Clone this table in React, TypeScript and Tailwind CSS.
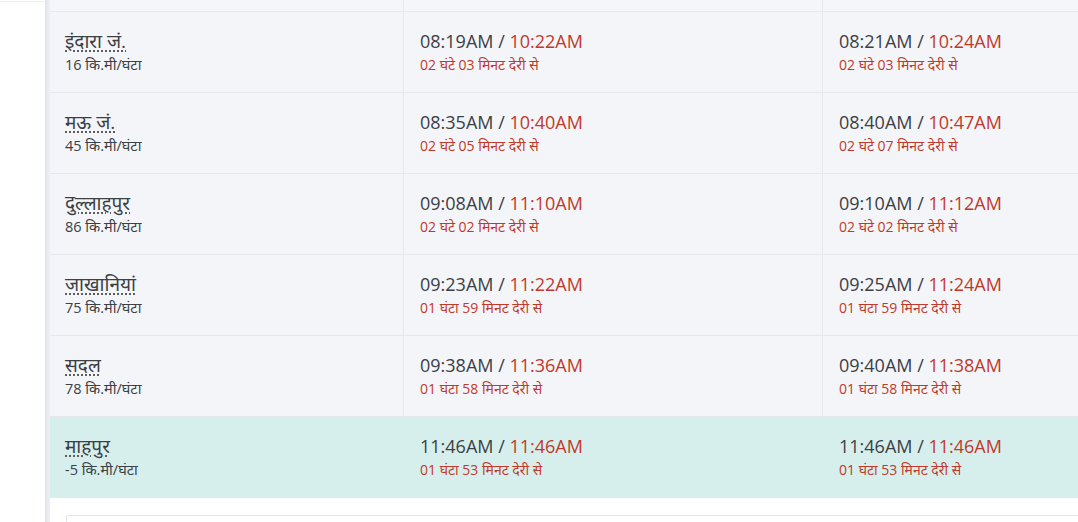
import React from "react";

type Row = { name: string; speed: string; a1: string; b1: string; d1: string; a2: string; b2: string; d2: string; hl?: boolean };

const rows: Row[] = [
  { name: "इंदारा जं.", speed: "16 कि.मी/घंटा", a1: "08:19AM", b1: "10:22AM", d1: "02 घंटे 03 मिनट देरी से", a2: "08:21AM", b2: "10:24AM", d2: "02 घंटे 03 मिनट देरी से" },
  { name: "मऊ जं.", speed: "45 कि.मी/घंटा", a1: "08:35AM", b1: "10:40AM", d1: "02 घंटे 05 मिनट देरी से", a2: "08:40AM", b2: "10:47AM", d2: "02 घंटे 07 मिनट देरी से" },
  { name: "दुल्लाहपुर", speed: "86 कि.मी/घंटा", a1: "09:08AM", b1: "11:10AM", d1: "02 घंटे 02 मिनट देरी से", a2: "09:10AM", b2: "11:12AM", d2: "02 घंटे 02 मिनट देरी से" },
  { name: "जाखानियां", speed: "75 कि.मी/घंटा", a1: "09:23AM", b1: "11:22AM", d1: "01 घंटा 59 मिनट देरी से", a2: "09:25AM", b2: "11:24AM", d2: "01 घंटा 59 मिनट देरी से" },
  { name: "सदल", speed: "78 कि.मी/घंटा", a1: "09:38AM", b1: "11:36AM", d1: "01 घंटा 58 मिनट देरी से", a2: "09:40AM", b2: "11:38AM", d2: "01 घंटा 58 मिनट देरी से" },
  { name: "माहपुर", speed: "-5 कि.मी/घंटा", a1: "11:46AM", b1: "11:46AM", d1: "01 घंटा 53 मिनट देरी से", a2: "11:46AM", b2: "11:46AM", d2: "01 घंटा 53 मिनट देरी से", hl: true },
];

function TimeCell({ a, b, d, last }: { a: string; b: string; d: string; last?: boolean }) {
  return (
    <div className={`pl-[16px] pt-[16px] ${last ? "" : "border-r border-[#e6e8ec]"}`}>
      <div className="text-[18px] leading-[26px] text-[#3b4045]">
        {a} / <span className="text-[#c0392b]">{b}</span>
      </div>
      <div className="text-[14px] leading-[22px] text-[#c0392b]">{d}</div>
    </div>
  );
}

export default function App() {
  return (
    <div
      className="w-[1078px] h-[522px] overflow-hidden bg-white flex"
      style={{ fontFamily: '"Open Sans", "Noto Sans", sans-serif' }}
    >
      <div className="w-[45px] shrink-0 bg-white border-t border-[#eceef2] mt-[1px]" />
      <div className="w-[5px] shrink-0 bg-gradient-to-r from-[#dfe3ec] to-[#eef0f5]" />
      <div className="flex-1 flex flex-col bg-white">
        <div className="h-[12px] bg-[#f5f6f9] border-b border-[#e6e8ec] grid grid-cols-[354px_419px_1fr] shrink-0">
          <div className="border-r border-[#e6e8ec]" />
          <div className="border-r border-[#e6e8ec]" />
          <div />
        </div>
        {rows.map((r) => (
          <div
            key={r.name}
            className={`h-[81px] shrink-0 grid grid-cols-[354px_419px_1fr] border-b border-[#e6e8ec] ${r.hl ? "bg-[#d7efec]" : "bg-[#f4f5f8]"}`}
          >
            <div className={`pl-[15px] pt-[16px] ${r.hl ? "" : "border-r border-[#e6e8ec]"}`}>
              <div className="text-[19px] leading-[26px] text-[#3b4045] underline decoration-dotted decoration-[#555] underline-offset-[3px] w-fit">
                {r.name}
              </div>
              <div className="text-[14.5px] leading-[22px] text-[#3b4045]">{r.speed}</div>
            </div>
            <TimeCell a={r.a1} b={r.b1} d={r.d1} last={r.hl} />
            <TimeCell a={r.a2} b={r.b2} d={r.d2} last />
          </div>
        ))}
        <div className="flex-1 pt-[17px] pl-[16px]">
          <div className="h-full border-t border-l border-[#e4e6ea] rounded-tl-[2px]" />
        </div>
      </div>
    </div>
  );
}
